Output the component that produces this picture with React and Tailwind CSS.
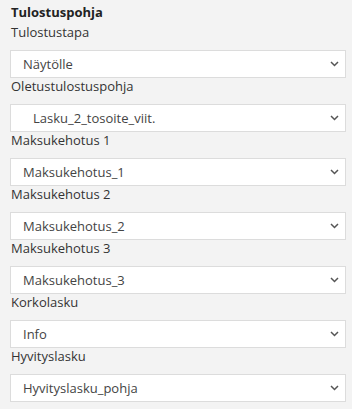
import React from 'react';

const KENTAT = [
  { label: 'Tulostustapa', arvo: 'Näytölle' },
  { label: 'Oletustulostuspohja', arvo: 'Lasku_2_tosoite_viit.', sisennys: true },
  { label: 'Maksukehotus 1', arvo: 'Maksukehotus_1' },
  { label: 'Maksukehotus 2', arvo: 'Maksukehotus_2' },
  { label: 'Maksukehotus 3', arvo: 'Maksukehotus_3' },
  { label: 'Korkolasku', arvo: 'Info' },
  { label: 'Hyvityslasku', arvo: 'Hyvityslasku_pohja' },
];

function Valinta({ arvo, sisennys }) {
  return (
    <div className="h-[28px] w-[336px] bg-white border border-[#dcdcdc] flex items-center justify-between pr-[6px]">
      <span className={`${sisennys ? 'pl-[22px]' : 'pl-[12px]'} text-[13px] text-[#444] leading-none`}>{arvo}</span>
      <svg width="9" height="6" viewBox="0 0 9 6" fill="none">
        <path d="M1 1l3.5 3.5L8 1" stroke="#555" strokeWidth="1.5" />
      </svg>
    </div>
  );
}

export default function App() {
  return (
    <div className="min-h-[409px] w-[352px] bg-[#f3f3f3] pl-[10px] pt-[3px] font-['Open_Sans',sans-serif]">
      <h2 className="text-[13px] font-bold leading-[18px] text-[#222] pl-[1px] mb-[3px]">Tulostuspohja</h2>
      {KENTAT.map((k) => (
        <div key={k.label}>
          <div className="text-[13px] leading-[16px] text-[#333] pl-[1px] mb-[10px]">{k.label}</div>
          <Valinta arvo={k.arvo} sisennys={k.sisennys} />
        </div>
      ))}
    </div>
  );
}
